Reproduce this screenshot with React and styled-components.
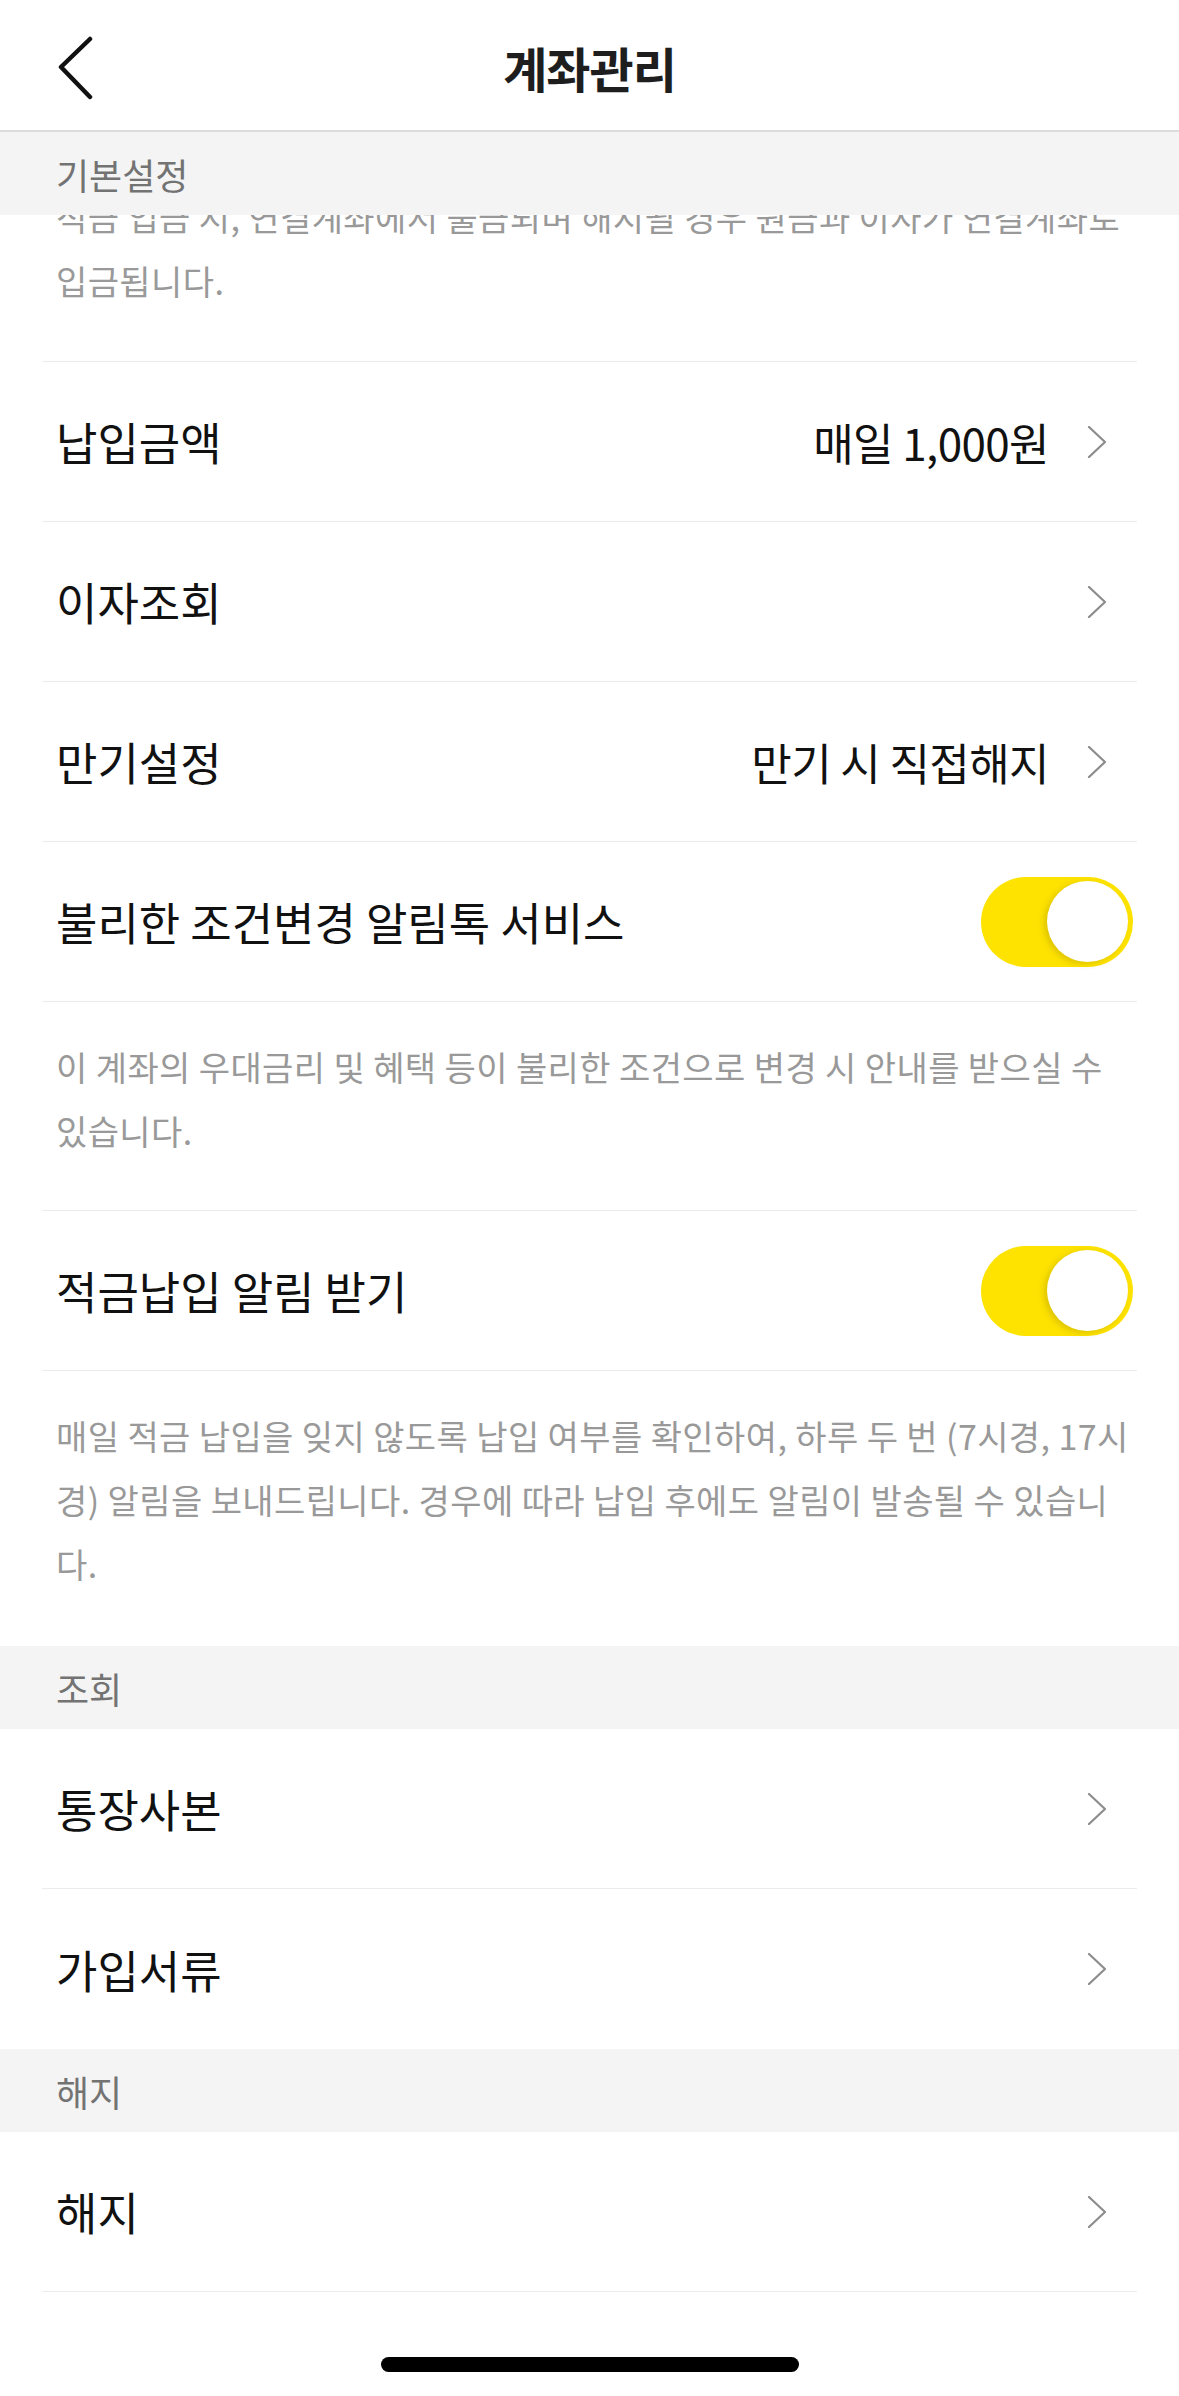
import React from 'react'
import { styled, createGlobalStyle } from 'styled-components'

const GlobalStyle = createGlobalStyle`
  html, body {
    margin: 0;
    padding: 0;
    background: #ffffff;
  }
  body {
    font-family: "Noto Sans CJK KR", "Noto Sans", sans-serif;
    -webkit-font-smoothing: antialiased;
  }
`

const BackIcon = () => (
  <svg width="40" height="64" viewBox="0 0 40 64" fill="none">
    <polyline points="34,3 5,31 34,61" stroke="#111" strokeWidth="4.5" strokeLinecap="round" strokeLinejoin="round" />
  </svg>
)

const ChevronIcon = () => (
  <svg width="20" height="32" viewBox="0 0 20 32" fill="none">
    <polyline points="2,1 18,16 2,31" stroke="#8c8c8c" strokeWidth="2.2" strokeLinecap="round" strokeLinejoin="round" />
  </svg>
)

export default function App() {
  return (
    <>
      <GlobalStyle />
      <Page>
        <NavBar>
          <BackButton aria-label="뒤로">
            <BackIcon />
          </BackButton>
          <Title>계좌관리</Title>
        </NavBar>

        <SectionHeader>기본설정</SectionHeader>
        <List>
          <ClippedNote>
            <Note $bottom={48}>
              적금 입금 시, 연결계좌에서 출금되며 해지될 경우 원금과 이자가 연결계좌로<br />
              입금됩니다.
            </Note>
          </ClippedNote>
          <Row>
            <Label>납입금액</Label>
            <Right>
              <Value>매일 1,000원</Value>
              <ChevronIcon />
            </Right>
          </Row>
          <Row>
            <Label>이자조회</Label>
            <Right>
              <ChevronIcon />
            </Right>
          </Row>
          <Row>
            <Label>만기설정</Label>
            <Right>
              <Value>만기 시 직접해지</Value>
              <ChevronIcon />
            </Right>
          </Row>
          <Row>
            <Label>불리한 조건변경 알림톡 서비스</Label>
            <Toggle $on>
              <Knob />
            </Toggle>
          </Row>
          <Note $bottom={47} $divider>
            이 계좌의 우대금리 및 혜택 등이 불리한 조건으로 변경 시 안내를 받으실 수<br />
            있습니다.
          </Note>
          <Row>
            <Label>적금납입 알림 받기</Label>
            <Toggle $on>
              <Knob />
            </Toggle>
          </Row>
          <Note $bottom={50}>
            매일 적금 납입을 잊지 않도록 납입 여부를 확인하여, 하루 두 번 (7시경, 17시<br />
            경) 알림을 보내드립니다. 경우에 따라 납입 후에도 알림이 발송될 수 있습니<br />
            다.
          </Note>
        </List>

        <SectionHeader>조회</SectionHeader>
        <List>
          <Row>
            <Label>통장사본</Label>
            <Right>
              <ChevronIcon />
            </Right>
          </Row>
          <Row $last>
            <Label>가입서류</Label>
            <Right>
              <ChevronIcon />
            </Right>
          </Row>
        </List>

        <SectionHeader>해지</SectionHeader>
        <List>
          <Row>
            <Label>해지</Label>
            <Right>
              <ChevronIcon />
            </Right>
          </Row>
        </List>

        <HomeArea>
          <HomeBar />
        </HomeArea>
      </Page>
    </>
  )
}

const Page = styled.div`
  width: 100%;
  min-height: 2396px;
  background: #fff;
  display: flex;
  flex-direction: column;
`

const NavBar = styled.header`
  position: relative;
  height: 130px;
  border-bottom: 2px solid #dcdcdc;
  display: flex;
  align-items: center;
  justify-content: center;
`

const BackButton = styled.button`
  position: absolute;
  left: 56px;
  top: 36px;
  padding: 0;
  border: 0;
  background: none;
  display: flex;
`

const Title = styled.h1`
  margin: 0;
  font-size: 48px;
  font-weight: 700;
  color: #1e1e1e;
  letter-spacing: -1px;
  line-height: 1;
  padding-top: 4px;
`

const SectionHeader = styled.div`
  position: relative;
  z-index: 1;
  height: 83px;
  background: #f4f4f4;
  padding-left: 56px;
  display: flex;
  align-items: center;
  font-size: 36px;
  color: #737373;
`

const List = styled.div`
  margin: 0 42px 0 42px;
  display: flex;
  flex-direction: column;
`

const Row = styled.div`
  height: 159px;
  border-bottom: ${({ $last }) => ($last ? '0' : '1px solid #ececec')};
  padding: 0 4px 0 14px;
  display: flex;
  align-items: center;
  justify-content: space-between;
  ${({ $last }) => ($last && 'height: 160px;')}
`

const Label = styled.span`
  font-size: 45px;
  color: #111;
`

const Right = styled.div`
  display: flex;
  align-items: center;
  gap: 38px;
  padding-right: 26px;
`

const Value = styled.span`
  font-size: 44px;
  color: #111;
  letter-spacing: -0.6px;
`

const Toggle = styled.div`
  width: 152px;
  height: 90px;
  border-radius: 45px;
  background: ${({ $on }) => ($on ? '#fee300' : '#e5e5e5')};
  display: flex;
  align-items: center;
  justify-content: ${({ $on }) => ($on ? 'flex-end' : 'flex-start')};
  padding: 0 5px;
  box-sizing: border-box;
`

const Knob = styled.div`
  width: 81px;
  height: 81px;
  border-radius: 50%;
  background: #fff;
  box-shadow: -3px 2px 6px rgba(120, 100, 0, 0.25);
`

const ClippedNote = styled.div`
  height: 146px;
  overflow: hidden;
  display: flex;
  flex-direction: column;
  justify-content: flex-end;
  border-bottom: 1px solid #ececec;
`

const Note = styled.p`
  margin: 0;
  padding: 33px 0 ${({ $bottom }) => $bottom}px 14px;
  font-size: 34px;
  line-height: 64px;
  color: #999;
  letter-spacing: 0.4px;
  word-break: break-all;
  border-bottom: ${({ $divider }) => ($divider ? '1px solid #ececec' : '0')};
`

const HomeArea = styled.div`
  flex: 1;
  display: flex;
  justify-content: center;
  padding-top: 65px;
`

const HomeBar = styled.div`
  width: 418px;
  height: 15px;
  border-radius: 8px;
  background: #000;
`
